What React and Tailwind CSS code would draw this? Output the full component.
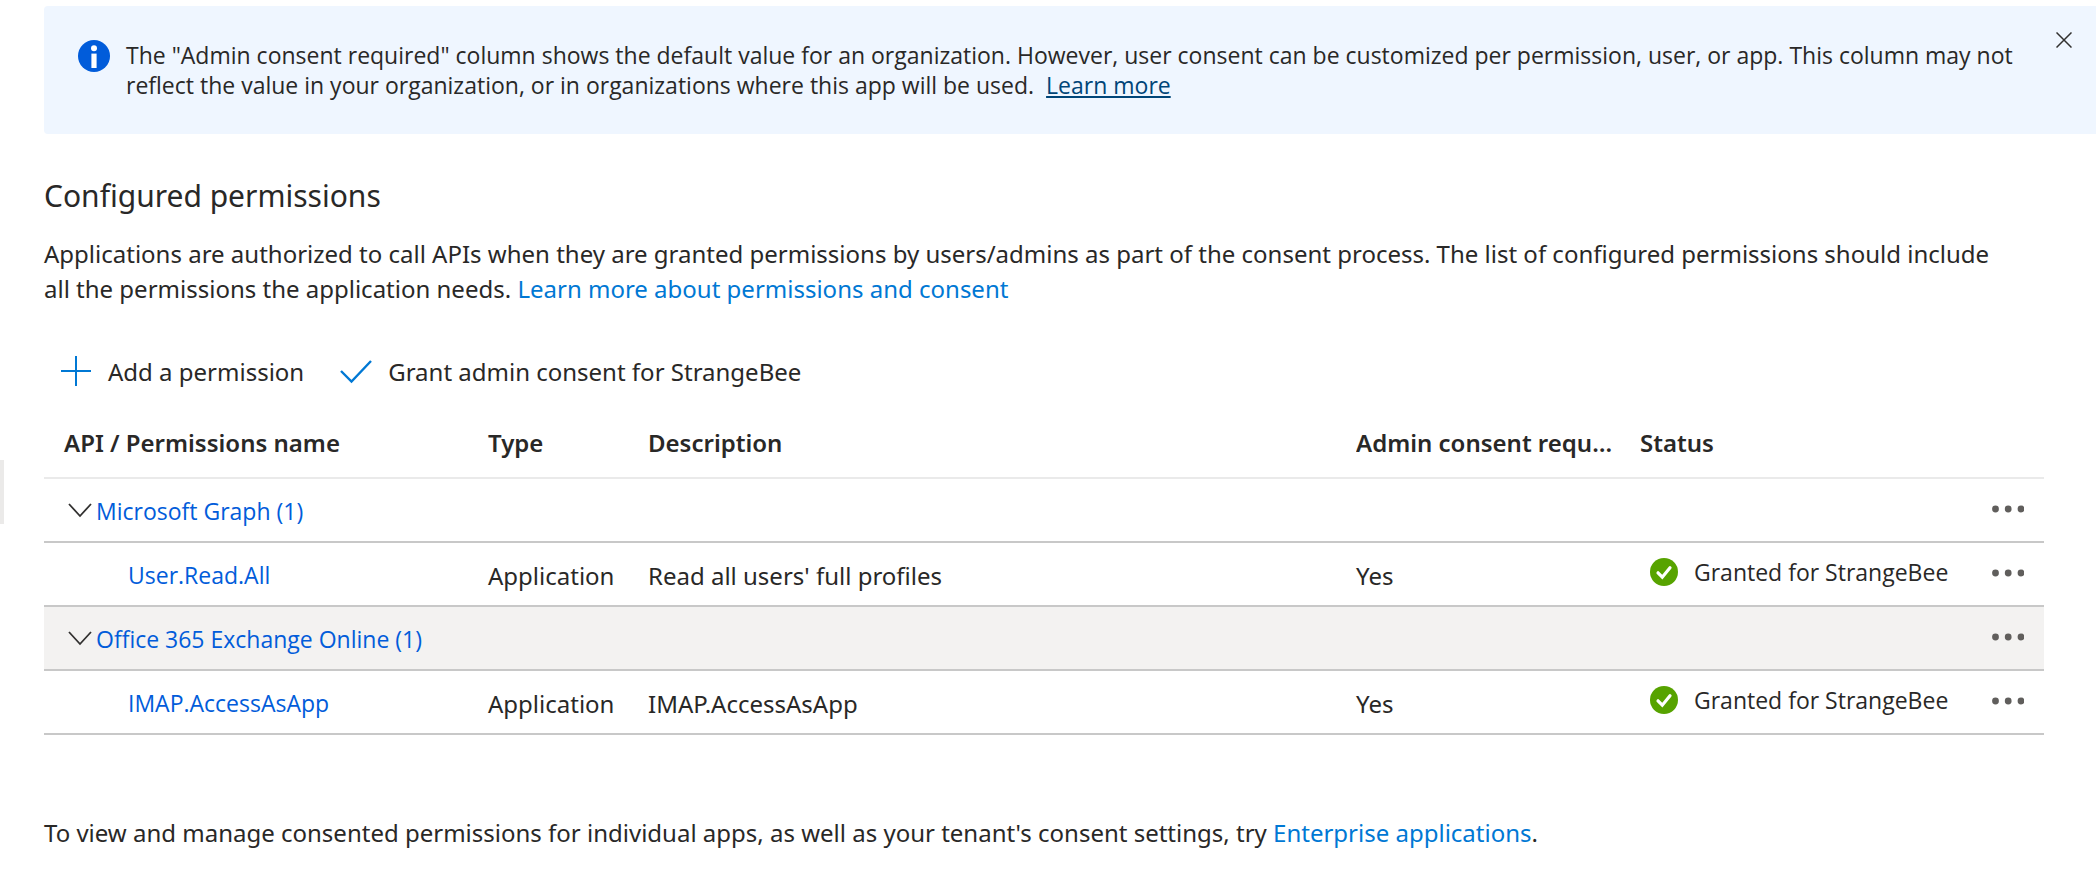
const Dots = () => (
  <svg className="h-2 w-8 fill-[#605e5c]" viewBox="0 0 32 8" aria-hidden="true">
    <circle cx="3.5" cy="4" r="3.4" />
    <circle cx="16.2" cy="4" r="3.4" />
    <circle cx="29" cy="4" r="3.4" />
  </svg>
);

const MoreCell = ({ label }) => (
  <td className="pb-1.5 pr-5 text-right">
    <button type="button" aria-label={label} className="inline-flex h-8 items-center align-middle">
      <Dots />
    </button>
  </td>
);

const GroupRow = ({ name, highlighted }) => (
  <tr className={highlighted ? "h-16 border-b-2 border-[#c8c8c8] bg-[#f3f2f1]" : "h-16 border-b-2 border-[#c8c8c8]"}>
    <td colSpan={5} className="pl-6 pt-0.5">
      <div className="flex items-center">
        <button type="button" aria-label={"Collapse " + name} className="flex h-8 w-7 items-center">
          <svg className="h-4 w-6" viewBox="0 0 24 16" fill="none" stroke="#323130" strokeWidth="1.8" aria-hidden="true">
            <path d="M1 1 L12 13 L23 1" />
          </svg>
        </button>
        <a href="#" className="font-['Open_Sans','Noto_Sans',sans-serif] text-[23px] text-[#015cda]">{name}</a>
      </div>
    </td>
    <MoreCell label={"More actions for " + name} />
  </tr>
);

const PermissionRow = ({ name, description }) => (
  <tr className="h-16 border-b-2 border-[#c8c8c8]">
    <td className="pl-21 pt-0.5">
      <a href="#" className="font-['Open_Sans','Noto_Sans',sans-serif] text-[23px] text-[#015cda]">{name}</a>
    </td>
    <td className="pt-0.5">Application</td>
    <td className="pt-0.5">{description}</td>
    <td className="pt-0.5">Yes</td>
    <td className="pb-1">
      <div className="flex items-center gap-4 pl-2.5 font-['Open_Sans','Noto_Sans',sans-serif] text-[23px]">
        <svg className="size-7 shrink-0" viewBox="0 0 28 28" aria-hidden="true">
          <circle cx="14" cy="14" r="14" fill="#57a300" />
          <path d="M8 14.8 L12.3 19.2 L20 9.8" fill="none" stroke="#fff" strokeWidth="3.2" strokeLinecap="round" strokeLinejoin="miter" />
        </svg>
        <span className="whitespace-nowrap">Granted for StrangeBee</span>
      </div>
    </td>
    <MoreCell label={"More actions for " + name} />
  </tr>
);

export default function App() {
  return (
    <div className="flex items-start bg-white font-['Noto_Sans','Open_Sans',sans-serif] text-[24px] leading-[35px] text-[#292827]">
      <div className="mt-[460px] h-16 w-1 shrink-0 bg-[#ebeae9]" />
      <main className="min-w-0 flex-1 pb-5 pl-10 pt-1.5">
        <section className="flex items-start rounded-l bg-[#eff6ff] pb-[34px] pl-[34px] pr-6 pt-[34px]">
          <svg className="mr-4 size-8 shrink-0" viewBox="0 0 32 32" aria-hidden="true">
            <circle cx="16" cy="16" r="16" fill="#015cda" />
            <circle cx="16" cy="8.2" r="3" fill="#fff" />
            <rect x="13.4" y="13.6" width="5.2" height="14.4" fill="#fff" />
          </svg>
          <p className="flex-1 font-['Open_Sans','Noto_Sans',sans-serif] text-[23px] leading-[30px]">
            The "Admin consent required" column shows the default value for an organization. However, user consent can be customized per permission, user, or app. This column may not reflect the value in your organization, or in organizations where this app will be used.&nbsp;{" "}
            <a href="#" className="text-[#004578] underline">Learn more</a>
          </p>
          <button type="button" aria-label="Dismiss" className="-mt-2 ml-8">
            <svg className="size-4" viewBox="0 0 16 16" stroke="#323130" strokeWidth="1.5" aria-hidden="true">
              <path d="M0.5 0.5 L15.5 15.5 M15.5 0.5 L0.5 15.5" />
            </svg>
          </button>
        </section>

        <h1 className="mt-10 text-[30px] leading-[44px]">Configured permissions</h1>
        <p className="mr-24 mt-[18px]">
          Applications are authorized to call APIs when they are granted permissions by users/admins as part of the consent process. The list of configured permissions should include all the permissions the application needs.{" "}
          <a href="#" className="text-[#0078d4]">Learn more about permissions and consent</a>
        </p>

        <div className="mt-12 flex items-center pl-4">
          <button type="button" className="flex items-center gap-4">
            <svg className="size-8" viewBox="0 0 32 32" stroke="#0078d4" strokeWidth="2" aria-hidden="true">
              <path d="M16 0 V30 M1 15 H31" />
            </svg>
            Add a permission
          </button>
          <button type="button" className="ml-9 flex items-center gap-4">
            <svg className="size-8" viewBox="0 0 32 32" fill="none" stroke="#0078d4" strokeWidth="2.4" aria-hidden="true">
              <path d="M1 15 L11.5 25.5 L31 5" />
            </svg>
            Grant admin consent for StrangeBee
          </button>
        </div>

        <table className="mt-[18px] w-[calc(100%-52px)] table-fixed border-collapse text-left">
          <colgroup>
            <col className="w-[444px]" />
            <col className="w-[160px]" />
            <col />
            <col className="w-[284px]" />
            <col className="w-[324px]" />
            <col className="w-[80px]" />
          </colgroup>
          <thead>
            <tr className="h-[71px] border-b-2 border-[#eaeaea] [&>th]:font-semibold">
              <th className="pl-5">API / Permissions name</th>
              <th>Type</th>
              <th>Description</th>
              <th className="truncate pr-6">Admin consent required</th>
              <th>Status</th>
              <td />
            </tr>
          </thead>
          <tbody>
            <GroupRow name="Microsoft Graph (1)" />
            <PermissionRow name="User.Read.All" description="Read all users' full profiles" />
            <GroupRow name="Office 365 Exchange Online (1)" highlighted />
            <PermissionRow name="IMAP.AccessAsApp" description="IMAP.AccessAsApp" />
          </tbody>
        </table>

        <p className="mt-20">
          To view and manage consented permissions for individual apps, as well as your tenant's consent settings, try{" "}
          <a href="#" className="text-[#0078d4]">Enterprise applications</a>.
        </p>
      </main>
    </div>
  );
}
